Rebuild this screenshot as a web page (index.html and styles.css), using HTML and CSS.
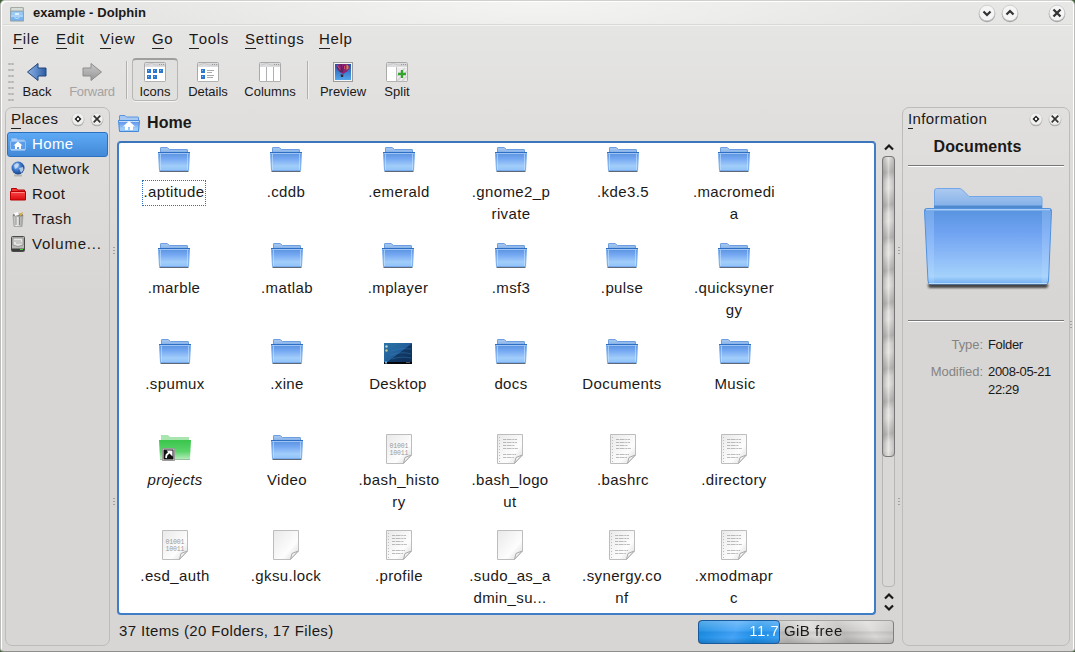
FILE: index.html
```html
<!DOCTYPE html>
<html lang="en">
<head>
<meta charset="utf-8">
<title>example - Dolphin</title>
<link rel="stylesheet" href="styles.css">
</head>
<body>
<svg class="defs" width="0" height="0" aria-hidden="true">
  <defs>
    <linearGradient id="front" x1="0" y1="0" x2="0" y2="1"><stop offset="0" stop-color="#5590df"/><stop offset=".35" stop-color="#76a8f2"/><stop offset=".75" stop-color="#a1cdfa"/><stop offset="1" stop-color="#90c4f8"/></linearGradient>
    <linearGradient id="bigfront" x1="0" y1="0" x2="0" y2="1"><stop offset="0" stop-color="#5793de"/><stop offset=".3" stop-color="#6ea2f1"/><stop offset=".6" stop-color="#8ab8f7"/><stop offset=".9" stop-color="#a4d2fb"/><stop offset="1" stop-color="#70aef0"/></linearGradient>
    <linearGradient id="tab" x1="0" y1="0" x2="0" y2="1"><stop offset="0" stop-color="#adcaf0"/><stop offset="1" stop-color="#80afe8"/></linearGradient>
    <linearGradient id="green" x1="0" y1="0" x2="0" y2="1"><stop offset="0" stop-color="#39c54b"/><stop offset=".6" stop-color="#5bd36a"/><stop offset="1" stop-color="#b2ebb8"/></linearGradient>
    <linearGradient id="red" x1="0" y1="0" x2="0" y2="1"><stop offset="0" stop-color="#ff4545"/><stop offset="1" stop-color="#d90b0f"/></linearGradient>
    <linearGradient id="paper" x1="0" y1="0" x2="1" y2="1"><stop offset="0" stop-color="#e8e9e8"/><stop offset=".65" stop-color="#fdfdfd"/><stop offset="1" stop-color="#d5d5d5"/></linearGradient>
    <linearGradient id="desk" x1="0" y1="0" x2="1" y2="1"><stop offset="0" stop-color="#2b73a5"/><stop offset=".5" stop-color="#235f9b"/><stop offset=".52" stop-color="#123965"/><stop offset="1" stop-color="#0d2d57"/></linearGradient>
    <linearGradient id="arrow" x1="0" y1="0" x2="1" y2="0"><stop offset="0" stop-color="#8fb0dc"/><stop offset=".5" stop-color="#5c8aca"/><stop offset="1" stop-color="#2c5a9e"/></linearGradient>
    <linearGradient id="garrow" x1="0" y1="0" x2="0" y2="1"><stop offset="0" stop-color="#c9c9c9"/><stop offset="1" stop-color="#969696"/></linearGradient>
    <radialGradient id="globe" cx=".4" cy=".35" r=".7"><stop offset="0" stop-color="#a8cdf5"/><stop offset=".45" stop-color="#3c78ca"/><stop offset="1" stop-color="#123981"/></radialGradient>
    <linearGradient id="sky" x1="0" y1="0" x2="0" y2="1"><stop offset="0" stop-color="#1e55ad"/><stop offset="1" stop-color="#55a5ec"/></linearGradient>
    <linearGradient id="metal" x1="0" y1="0" x2="1" y2="0"><stop offset="0" stop-color="#a7a7a5"/><stop offset=".35" stop-color="#f0f0ee"/><stop offset="1" stop-color="#999"/></linearGradient>
    <filter id="soft" x="-10%" y="-200%" width="120%" height="500%"><feGaussianBlur stdDeviation="1.3"/></filter>
    <symbol id="folder" viewBox="0 0 32 32">
      <path d="M2.500 9V4q0-.5.500-.5h6q.6 0 1 .7l1.500 1.300H29q.5 0 .5.500V9z" fill="url(#tab)" stroke="#6d9fe0"/>
      <path d="M.500 8.500H31.500L30.500 26.500H1.500z" fill="url(#front)" stroke="#77aaee"/>
      <path d="M0 8.500H32" stroke="#2c6fc5"/>
      <path d="M1 9.500H31" stroke="#b2d0f5" stroke-opacity=".8"/>
      <path d="M2.500 10V26M29.500 10V26" stroke="#c7e2ff" stroke-opacity=".6"/>
      <path d="M1.500 27.500H30.500" stroke="#5f6975"/>
    </symbol>
    <symbol id="homefolder" viewBox="0 0 22 20">
      <path d="M1.500 7V2q0-.5.500-.5h5L8.500 3H20q.5 0 .5.500V7z" fill="#a6c8f2" stroke="#5d95dc"/>
      <path d="M.5 6.500H21.500L20.500 17.500H1.500z" fill="url(#front)" stroke="#4588d8"/>
      <path d="M1 7.500H21" stroke="#c5ddf8"/>
      <path d="M11 7l6 5.500h-2V16h-3v-3h-2v3H7v-3.500H5z" fill="#fff"/>
    </symbol>
    <symbol id="page" viewBox="0 0 26 30">
      <path d="M.5.500H25.500V21L17.500 29.500H.5z" fill="url(#paper)" stroke="#bdbdbd"/>
      <path d="M17.500 29.300L19 23.500 25.300 21z" fill="#f5f5f5" stroke="#a9a9a9"/>
    </symbol>
    <symbol id="textpage" viewBox="0 0 26 30">
      <use href="#page"/>
      <path d="M2.500 3V28" stroke="#bdbdbd" stroke-dasharray="1 2"/>
      <path d="M6 5.500h14M6 8.500h14M6 11.500h12M6 14.500h15M6 20.500h13M6 23.500h11" stroke="#888" stroke-opacity=".55" stroke-dasharray="3 .6 5 .7 2 .5"/>
    </symbol>
    <symbol id="binpage" viewBox="0 0 26 30">
      <use href="#page"/>
      <text x="3.500" y="14" class="bits" textLength="19">01001</text>
      <text x="3.500" y="20.500" class="bits" textLength="19">10011</text>
    </symbol>
    <symbol id="linked" viewBox="0 0 32 32">
      <path d="M2 10V3H9L11 5H30V10z" fill="#a8e5af"/>
      <path d="M0 8H32L31 27H1z" fill="url(#green)"/><path d="M1 27.500H31" stroke="#9abf9e"/>
      <rect x="3" y="16" width="13" height="13" rx="1.500" fill="#444"/>
      <rect x="4" y="17" width="11" height="11" fill="#111" stroke="#f2f2f2"/>
      <path d="M7 26l.5-3 3.500-3.500" fill="none" stroke="#fff" stroke-width="1.800"/><path d="M7.500 18.500H13.500V24.500z" fill="#fff"/>
    </symbol>
    <symbol id="desktop" viewBox="0 0 32 32">
      <rect x="2" y="7" width="28" height="21" fill="url(#desk)"/>
      <path d="M9 15q10-4 20-2M8 19q12-4 21-1M10 23q8-3 19-1" fill="none" stroke="#337eb5" stroke-opacity=".45"/>
      <path d="M2 27H30" stroke="#05060a" stroke-width="2"/><path d="M3 26.500h2" stroke="#72b7e7" stroke-width="2"/><path d="M24 26.500h4" stroke="#555"/>
      <circle cx="4.500" cy="10.500" r="1.200" fill="#b9d4dc"/><circle cx="4.500" cy="14.500" r="1.200" fill="#c4c98b"/>
    </symbol>
    <symbol id="pane" viewBox="0 0 22 20">
      <rect x=".5" y=".5" width="21" height="19" rx="1" fill="#fff" stroke="#aaa"/>
      <path d="M1 1h20v4H1z" fill="#dcdcde"/><path d="M2 3q6-3 10 0h9" fill="none" stroke="#c8c8ca"/><path d="M15 2.500h1m1 0h1m1 0h1" stroke="#999"/>
      <path d="M1 19.500h20" stroke="#b2b2b2"/>
    </symbol>
    <symbol id="knob" viewBox="0 0 14 15"><circle cx="7" cy="8" r="6.300" fill="#aaa"/><circle cx="7" cy="7" r="6" fill="#f1f1f0" stroke="#ccc" stroke-width=".6"/></symbol>
    <symbol id="float" viewBox="0 0 14 15"><use href="#knob"/><path d="M7 3.500L10.500 7 7 10.500 3.500 7z" fill="#222"/><circle cx="7" cy="7" r="1.200" fill="#fff"/></symbol>
    <symbol id="closesmall" viewBox="0 0 14 15"><use href="#knob"/><path d="M3.700 3.700l6.600 6.600M10.300 3.700l-6.600 6.600" stroke="#333" stroke-width="1.700"/></symbol>
  </defs>
</svg>

<div class="window">
  <header class="titlebar">
    <svg class="appicon" viewBox="0 0 14 16"><path d="M1 1.500h12l.7 3v10.500H.3V4.500z" fill="#77b4ed" stroke="#8d9da8"/><path d="M1 1.500h12L13.500 5H.5z" fill="#d6ddd8" stroke="#a4aba3"/><rect x="1.500" y="6" width="11" height="3" fill="#9bcbf5"/><path d="M1 10h12" stroke="#dcefff"/><path d="M5 7h4v2H5z" fill="#dcefff"/><path d="M4.500 11.500q2.500 2 5 0" stroke="#c7e3fc" fill="none"/></svg>
    <h1>example - Dolphin</h1>
    <div class="winbuttons">
      <svg viewBox="0 0 18 19"><circle cx="9" cy="10" r="8.300" fill="#a3a3a3"/><circle cx="9" cy="9" r="7.800" fill="#f5f5f5" stroke="#c4c4c4" stroke-width=".7"/><path d="M5.500 7.500L9 11l3.500-3.500" fill="none" stroke="#333" stroke-width="2.200"/></svg>
      <svg viewBox="0 0 18 19"><circle cx="9" cy="10" r="8.300" fill="#a3a3a3"/><circle cx="9" cy="9" r="7.800" fill="#f5f5f5" stroke="#c4c4c4" stroke-width=".7"/><path d="M5.500 10.500L9 7l3.500 3.500" fill="none" stroke="#333" stroke-width="2.200"/></svg>
      <svg class="close" viewBox="0 0 18 19"><circle cx="9" cy="10" r="8.300" fill="#a3a3a3"/><circle cx="9" cy="9" r="7.800" fill="#f5f5f5" stroke="#c4c4c4" stroke-width=".7"/><path d="M5.500 5.500l7 7M12.500 5.500l-7 7" stroke="#333" stroke-width="2.300"/></svg>
    </div>
  </header>

  <nav class="menubar">
    <span><u>F</u>ile</span><span><u>E</u>dit</span><span><u>V</u>iew</span><span><u>G</u>o</span><span><u>T</u>ools</span><span><u>S</u>ettings</span><span><u>H</u>elp</span>
  </nav>

  <div class="toolbar">
    <div class="grip"></div>
    <div class="tool"><svg viewBox="0 0 22 20"><path d="M1.500 10L12 1.500V6h8v8h-8v4.500z" fill="url(#arrow)" stroke="#20467f"/></svg><span>Back</span></div>
    <div class="tool off"><svg viewBox="0 0 22 20"><path d="M20.500 10L10 1.500V6H2v8h8v4.500z" fill="url(#garrow)" stroke="#8d8d8d"/></svg><span>Forward</span></div>
    <div class="sep"></div>
    <div class="tool on"><svg viewBox="0 0 22 20"><use href="#pane"/><path d="M3 7h4v4H3zM9 7h4v4H9zM15 7h4v4h-4zM3 13h4v4H3zM9 13h4v4H9z" fill="#2b77cb"/><path d="M4 8.500h1m5 0h1m5 0h1M4 14.500h1m5 0h1" stroke="#8fc0f2"/></svg><span>Icons</span></div>
    <div class="tool"><svg viewBox="0 0 22 20"><use href="#pane"/><path d="M4 7h4v4H4zM4 13h4v4H4z" fill="#2b77cb"/><path d="M5 8.500h1M5 14.500h1" stroke="#8fc0f2"/><path d="M10 8.500h7M10 10.500h5M10 13.500h7M10 15.500h6" stroke="#aaa"/></svg><span>Details</span></div>
    <div class="tool"><svg viewBox="0 0 22 20"><use href="#pane"/><path d="M7.500 5v14M14.500 5v14" stroke="#b0b0b0"/></svg><span>Columns</span></div>
    <div class="sep"></div>
    <div class="tool"><svg viewBox="0 0 22 20"><rect x="1.500" y=".5" width="19" height="19" fill="#f5f5f5" stroke="#9a9a9a"/><rect x="3" y="2" width="16" height="16" fill="url(#sky)"/><path d="M4.500 3.500L7 2h8l3 2q0 3-3 5.500L11 12 7.500 10 5 7z" fill="#8c2374"/><path d="M9 2l1 8M12 3l-2 7M5 5l4 5" fill="none" stroke="#512459"/><path d="M14.500 2.500q2.500 1 2 4l-2 1.500z" fill="#c9923f"/><path d="M5.500 3.500l2.500 4M12.500 4v3" stroke="#d64a78"/><path d="M8.500 12.500h3l-.5 2.500H9z" fill="#3b2330"/></svg><span>Preview</span></div>
    <div class="tool"><svg viewBox="0 0 22 20"><use href="#pane"/><path d="M10 5.500h11V19H10z" fill="#ececec"/><path d="M11 14l8-8M11 19L21 9M16 19l5-5" stroke="#d4d4d4" stroke-width="1.500"/><path d="M10.500 5v14" stroke="#bbb"/><path d="M16 8v8M12 12h8" stroke="#35a32e" stroke-width="2.300"/></svg><span>Split</span></div>
  </div>

  <div class="body">
    <aside class="dock places">
      <div class="dockhead"><span><u>P</u>laces</span><svg><use href="#float"/></svg><svg><use href="#closesmall"/></svg></div>
      <ul>
        <li class="sel"><svg viewBox="0 0 16 16"><path d="M1.500 7V2.500h5L7.500 4h7v3z" fill="#a8cdf7" stroke="#8ebcf0"/><path d="M.5 5.500h15v8H.5z" fill="#5b9ce8" stroke="#8fbef4"/><path d="M1 14h14" stroke="#c4dfff"/><path d="M8 5.500l4.500 4H11V13H9v-2H7v2H5V9.500H3.500z" fill="#fff"/></svg>Home</li>
        <li><svg viewBox="0 0 16 16"><path d="M4 14.500h8" stroke="#b6b6b4" stroke-width="2"/><circle cx="8" cy="7" r="6.500" fill="url(#globe)"/><path d="M4 4l3-2 2 1-1 3-3 2zM9 7l4-1 .5 3L11 12z" fill="#d0e0f5" fill-opacity=".8"/></svg>Network</li>
        <li><svg viewBox="0 0 16 16"><path d="M1.500 6V2.500h5L7.500 4h7v2z" fill="#f23636" stroke="#b90003"/><path d="M.5 5.500h15v8.500H.5z" fill="url(#red)" stroke="#b90003"/><path d="M1.500 6.500h13" stroke="#ff8a8a"/></svg>Root</li>
        <li><svg viewBox="0 0 16 16"><path d="M3 4h10l-1 11.500H4z" fill="url(#metal)" stroke="#a0a09d" stroke-width=".8"/><path d="M6 6v8M9.500 6v8" stroke="#888"/><ellipse cx="8" cy="4" rx="5" ry="1.500" fill="#777"/><path d="M4 2l4-1 1 3-4 1z" fill="#fafafa"/><path d="M9 3l4-2-1 3-2 1z" fill="#d7ae45"/></svg>Trash</li>
        <li class="vol"><svg viewBox="0 0 16 16"><rect x="1.500" y=".5" width="13" height="15" rx="1" fill="#b9b9b7" stroke="#4b4b4b"/><path d="M3 2h10v7q-5 3-10 0z" fill="#e4e4e2" stroke="#777" stroke-width=".7"/><path d="M4 5h7M6 7h6" stroke="#aaa"/><path d="M2 12.500h12v2.500H2z" fill="#3c3c3c"/><path d="M10 13.500h3" stroke="#4ad13b"/></svg>Volume...</li>
      </ul>
    </aside>
    <div class="splitter"><i></i><i></i></div>

    <main>
      <div class="crumb"><svg viewBox="0 0 22 20"><use href="#homefolder"/></svg><b>Home</b></div>
      <div class="viewrow">
        <div class="view">
          <div class="item"><svg><use href="#folder"/></svg><span class="focus">.aptitude</span></div>
          <div class="item"><svg><use href="#folder"/></svg><span>.cddb</span></div>
          <div class="item r"><svg><use href="#folder"/></svg><span>.emerald</span></div>
          <div class="item r"><svg><use href="#folder"/></svg><span>.gnome2_p<br>rivate</span></div>
          <div class="item r"><svg><use href="#folder"/></svg><span>.kde3.5</span></div>
          <div class="item"><svg><use href="#folder"/></svg><span>.macromedi<br>a</span></div>

          <div class="item"><svg><use href="#folder"/></svg><span>.marble</span></div>
          <div class="item r"><svg><use href="#folder"/></svg><span>.matlab</span></div>
          <div class="item"><svg><use href="#folder"/></svg><span>.mplayer</span></div>
          <div class="item r"><svg><use href="#folder"/></svg><span>.msf3</span></div>
          <div class="item"><svg><use href="#folder"/></svg><span>.pulse</span></div>
          <div class="item"><svg><use href="#folder"/></svg><span>.quicksyner<br>gy</span></div>

          <div class="item r"><svg><use href="#folder"/></svg><span>.spumux</span></div>
          <div class="item r"><svg><use href="#folder"/></svg><span>.xine</span></div>
          <div class="item"><svg><use href="#desktop"/></svg><span>Desktop</span></div>
          <div class="item r"><svg><use href="#folder"/></svg><span>docs</span></div>
          <div class="item"><svg><use href="#folder"/></svg><span>Documents</span></div>
          <div class="item r"><svg><use href="#folder"/></svg><span>Music</span></div>

          <div class="item r"><svg><use href="#linked"/></svg><span class="link">projects</span></div>
          <div class="item r"><svg><use href="#folder"/></svg><span>Video</span></div>
          <div class="item r"><svg class="file"><use href="#binpage"/></svg><span>.bash_histo<br>ry</span></div>
          <div class="item"><svg class="file"><use href="#textpage"/></svg><span>.bash_logo<br>ut</span></div>
          <div class="item r"><svg class="file"><use href="#textpage"/></svg><span>.bashrc</span></div>
          <div class="item"><svg class="file"><use href="#textpage"/></svg><span>.directory</span></div>

          <div class="item r"><svg class="file"><use href="#binpage"/></svg><span>.esd_auth</span></div>
          <div class="item"><svg class="file"><use href="#page"/></svg><span>.gksu.lock</span></div>
          <div class="item r"><svg class="file"><use href="#textpage"/></svg><span>.profile</span></div>
          <div class="item"><svg class="file"><use href="#page"/></svg><span>.sudo_as_a<br>dmin_su...</span></div>
          <div class="item"><svg class="file"><use href="#textpage"/></svg><span>.synergy.co<br>nf</span></div>
          <div class="item"><svg class="file"><use href="#textpage"/></svg><span>.xmodmapr<br>c</span></div>
        </div>
        <div class="scroll">
          <svg class="chev" viewBox="0 0 12 8"><path d="M2 6.500L6 2.500l4 4" /></svg>
          <div class="groove"><div class="thumb"></div></div>
          <svg class="chev low" viewBox="0 0 12 8"><path d="M2 6.500L6 2.500l4 4"/></svg>
          <svg class="chev last" viewBox="0 0 12 8"><path d="M2 1.500l4 4 4-4"/></svg>
        </div>
      </div>
      <footer><span>37 Items (20 Folders, 17 Files)</span><div class="space"><div class="used"></div><span>11.7 GiB free</span></div></footer>
    </main>
    <div class="splitter"><i></i><i></i></div>

    <aside class="dock info">
      <div class="dockhead"><span><u>I</u>nformation</span><svg><use href="#float"/></svg><svg><use href="#closesmall"/></svg></div>
      <h2>Documents</h2>
      <svg class="preview" viewBox="0 0 128 106">
        <rect x="4" y="95" width="120" height="5" rx="2.500" fill="#333" fill-opacity=".9" filter="url(#soft)"/>
        <path d="M10.500 20V3q0-2.500 2-2.500H35q2 0 3.500 1.500L45 8.500H116q2 0 2 2V20z" fill="url(#tab)" stroke="#73a6ea"/>
        <path d="M10 19h108" stroke="#4f89cf" stroke-width="3"/>
        <path d="M.5 23q0-2.500 2-2.500h123q2 0 2 2.500L124.500 93q0 3-3 3H7q-3 0-3-3z" fill="url(#bigfront)" stroke="#5292dd"/>
        <path d="M1 23h9v72H7q-2 0-2.500-3zM118 23h9L124 92q-1 3-3 3h-3z" fill="#b9dcff" fill-opacity=".28"/>
        <path d="M2 21.700h124" stroke="#a9cdf6" stroke-width="1.500"/>
        <path d="M5 95.500h118" stroke="#b8dcfc"/>
      </svg>
      <dl><dt>Type:</dt><dd>Folder</dd><dt>Modified:</dt><dd>2008-05-21<br>22:29</dd></dl>
    </aside>
    <div class="edge"></div>
  </div>
</div>
</body>
</html>
```
FILE: styles.css
```css
* { box-sizing: border-box; }
body { margin: 0; background: #42623a; overflow: hidden; }
.defs { position: absolute; }
.window {
  width: 1075px; height: 652px;
  display: flex; flex-direction: column;
  border: 1px solid #bcbcbb; border-top: 1px solid #d0d0cf; border-bottom-color: #8f8f8e;
  border-radius: 5px 5px 4px 4px;
  box-shadow: inset 2px 2px 0 -1px #fff, inset -2px 0 0 -1px #fff;
  background: linear-gradient(#e7e7e6, #e1e0df 100px, #d7d6d4 300px);
  font: 15px/22px "Liberation Sans", Arial, sans-serif;
  letter-spacing: .38px; color: #1b1918;
}
svg { display: block; flex: none; }
u { text-decoration: none; box-shadow: 0 1px 0 #222; display: inline-block; height: 18px; line-height: 18px; }

.titlebar {
  height: 24px; flex: none; display: flex; align-items: center; padding: 0 8px;
  margin: 1px 2px 0; border-bottom: 1px solid #f3f3f2;
  background: radial-gradient(ellipse 400px 60px at 50% 0, #f4f4f3, #f4f4f300);
  box-shadow: inset 0 -1px 0 #d9d9d8;
}
.appicon { width: 14px; height: 16px; margin-left: -1px; }
h1 { margin: -2px 0 0 9px; font-size: 13px; line-height: 16px; letter-spacing: .06px; }
.winbuttons { margin-left: auto; display: flex; gap: 5px; margin-right: -2px; }
.winbuttons svg { width: 18px; height: 19px; margin-top: -1px; }
.winbuttons .close { margin-left: 24px; }

.menubar {
  height: 31px; flex: none; padding: 4px 0 0 12px; letter-spacing: .65px; line-height: 18px;
  display: grid; grid-template-columns: 43px 44px 52px 37px 56px 74px auto;
}

.toolbar {
  height: 50px; flex: none; display: grid; padding: 1px 0 5px 7px;
  grid-template-columns: 6px 46px 64px 8px 46px 60px 64px 11px 60px 48px;
}
.grip {
  margin: 3px 0 1px;
  background: radial-gradient(circle, #b5b5b4 30%, transparent 42%) 0 0 / 3px 6px;
}
.tool {
  display: flex; flex-direction: column; align-items: center; padding-top: 4px; height: 43px;
  font-size: 13px; line-height: 16px; letter-spacing: 0;
}
.tool svg { width: 22px; height: 20px; }
.tool span { margin-top: 2px; white-space: nowrap; }
.tool.off { color: #a4a3a2; letter-spacing: -.3px; }
.tool.on { border: 1px solid #b6b6b5; border-top: 2px solid #9f9f9e; border-radius: 4px; padding-top: 2px; background: #e0e0df; box-shadow: 0 1px 0 #f4f4f3; }
.sep { width: 1px; height: 38px; margin: 3px 0 0 2px; background: #b0b0af; box-shadow: 1px 0 0 #efefee; }
.sep:nth-child(8) { margin-left: 5px; }

.body { flex: none; height: 539px; display: flex; padding-left: 4px; }
.dock { border: 1px solid #bdbcbb; border-radius: 7px; flex: none; }
.places { width: 105px; }
.info { width: 168px; }
.dockhead { height: 24px; display: flex; padding: 2px 7px 0 5px; line-height: 18px; }
.dockhead span { flex: 1; }
.dockhead svg { width: 14px; height: 15px; margin: 2px 0 0 5px; }
.places .dockhead { padding-right: 5px; }
ul { margin: 0; padding: 0 1px; list-style: none; }
li { height: 25px; display: flex; align-items: center; gap: 6px; padding: 0 0 2px 2px; border: 1px solid transparent; white-space: nowrap; }
li svg { width: 16px; height: 16px; margin-top: 1px; }
.vol { letter-spacing: .8px; }
.sel { color: #fff; border-color: #2d70bf; border-radius: 3px; background: linear-gradient(#5eaaf5, #4289d8); }

.splitter { width: 8px; flex: none; display: flex; flex-direction: column; align-items: center; padding-top: 140px; gap: 243px; }
.splitter i, .edge { width: 2px; height: 8px; background: linear-gradient(#a2a2a1 50%, transparent 50%) 0 0 / 2px 3px; }
.edge { margin: 214px 0 0; }

main { width: 777px; flex: none; display: flex; flex-direction: column; }
main + .splitter { width: 7px; }
.crumb { height: 34px; display: flex; }
.crumb svg { width: 22px; height: 20px; margin-top: 7px; }
.crumb b { font-size: 16px; line-height: 22px; letter-spacing: .1px; margin: 5px 0 0 7px; }
.viewrow { height: 474px; display: flex; gap: 6px; margin-left: -1px; }
.view {
  width: 759px; border: 2px solid #3f7dc7; border-top-color: #3b75bc; border-radius: 4px; background: #fff;
  padding-top: 1px; display: grid; grid-template-columns: repeat(6, 112px); grid-auto-rows: 96px; overflow: hidden;
}
.item { display: flex; flex-direction: column; align-items: center; text-align: center; height: 88px; margin-left: -1px; margin-right: 1px; }
.item.r { margin-left: 0; margin-right: 0; }
.item svg { width: 32px; height: 32px; }
.item svg.file { width: 26px; height: 30px; margin-top: 2px; }
.item span { margin-top: 5px; white-space: nowrap; }
.focus { position: relative; }
.focus::after { content: ""; position: absolute; inset: -1px -2px -3px; border: 1px dotted #2d70bf; }
.link { font-style: italic; letter-spacing: .3px; }
.bits { font: 6.500px "Liberation Mono", monospace; fill: #999; letter-spacing: 0; }

.scroll { width: 13px; display: flex; flex-direction: column; align-items: center; padding-top: 2px; }
.chev { width: 12px; height: 8px; margin-bottom: 5px; }
.chev path { fill: none; stroke: #181818; stroke-width: 2.200; }
.chev.low { margin: 5px 0 0; }
.chev.last { margin: 4px 0 0; }
.groove { width: 13px; height: 431px; border: 1px solid #b7b6b5; border-radius: 4px; background: #d9d8d6; }
.thumb {
  width: 13px; height: 301px; margin: -1px; border: 1px solid #777; border-radius: 4px;
  background:
    linear-gradient(90deg, #77777760, transparent 35%, #ffffff55 50%, transparent 65%, #88888850),
    repeating-linear-gradient(168deg, #deddda 0, #b5b4b2 16px, #d8d7d5 24px, #deddda 32px);
}

footer { height: 31px; display: flex; justify-content: space-between; padding: 5px 1px 0 1px; letter-spacing: .36px; }
.space {
  width: 196px; height: 24px; position: relative; border: 1px solid #7e7e7d; border-top-color: #a2a2a1; border-radius: 4px; text-align: center;
  background:
    linear-gradient(#ffffff50, #ffffff18 45%, #80808028 50%, transparent 70%, #66666640),
    repeating-linear-gradient(60deg, #dad9d7 0, #bcbbb9 26px, #dad9d7 52px);
}
.used {
  position: absolute; inset: -1px auto -1px -1px; width: 82px; border: 1px solid #185a9c; border-radius: 4px;
  background: linear-gradient(#ffffff45, #ffffff10 45%, #00409015 50%, transparent 75%, #00306040), linear-gradient(110deg, #178be0, #45a5f8 45%, #1e92ea 70%, #3aa0f5);
}
.space span {
  position: relative; display: block; line-height: 20px; letter-spacing: .48px;
  background: linear-gradient(90deg, #fff 79px, #1b1918 79px); background-clip: text; color: transparent;
}

h2 { margin: 3px 0 0; width: 149px; text-align: center; font-size: 16px; line-height: 24px; letter-spacing: .1px; }
.info h2::after { content: ""; display: block; width: 156px; height: 2px; margin: 6px 0 0 5px; background: linear-gradient(#777 50%, #fff 50%); }
.preview { width: 128px; height: 106px; margin: 21px 0 0 21px; }
dl { display: grid; grid-template-columns: 75px 1fr; column-gap: 5px; row-gap: 9px; margin: 26px 5px 0; padding-top: 15px; border-top: 1px solid #777; box-shadow: inset 0 1px 0 #fff; font-size: 13px; line-height: 18px; letter-spacing: -.05px; }
dt { text-align: right; color: #858483; }
dd { margin: 0; letter-spacing: -.35px; }
```
